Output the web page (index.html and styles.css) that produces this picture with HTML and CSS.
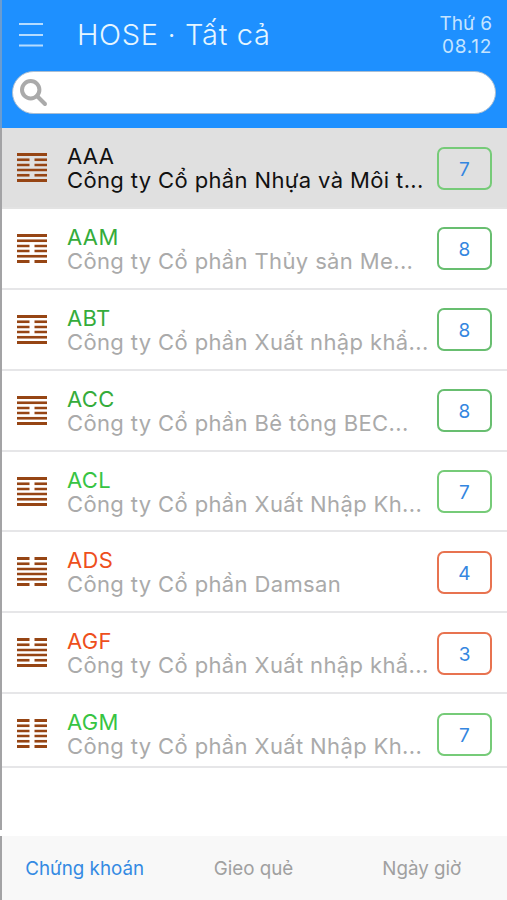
FILE: index.html
```
<!DOCTYPE html>
<html lang="vi">
<head>
<meta charset="utf-8">
<title>HOSE · Tất cả</title>
<link rel="stylesheet" href="styles.css">
</head>
<body>
<svg class="defs" width="0" height="0">
  <symbol id="yang" viewBox="0 0 30 3"><path d="M0 0H30V3H0Z"/></symbol>
  <symbol id="yin" viewBox="0 0 30 3"><path d="M0 0H12.5V3H0ZM17.5 0H30V3H17.5Z"/></symbol>
</svg>
<div class="app">
  <header class="header">
    <div class="bar">
      <svg class="menu" viewBox="0 0 24 26"><path d="M0 2H24M0 13H24M0 23.5H24"/></svg>
      <h1 class="title">HOSE · Tất cả</h1>
      <div class="date"><span>Thứ 6</span><span class="day">08.12</span></div>
    </div>
    <div class="search">
      <svg class="glass" viewBox="0 0 28 28"><circle cx="10.7" cy="10.7" r="8.7"/><path d="M17 17L25 25"/></svg>
    </div>
  </header>
  <main class="list" id="list"></main>
  <nav class="tabs">
    <span class="tab active">Chứng khoán</span>
    <span class="tab">Gieo quẻ</span>
    <span class="tab">Ngày giờ</span>
  </nav>
</div>
<script src="app.js"></script>
</body>
</html>
```
FILE: app.js
```
const stocks = [
  ["AAA", "Công ty Cổ phần Nhựa và Môi t...", 7, "100101", "selected"],
  ["AAM", "Công ty Cổ phần Thủy sản Me...", 8, "110010", "up deep"],
  ["ABT", "Công ty Cổ phần Xuất nhập khẩ...", 8, "100011", "up deep"],
  ["ACC", "Công ty Cổ phần Bê tông BEC...", 8, "110011", "up deep"],
  ["ACL", "Công ty Cổ phần Xuất Nhập Kh...", 7, "100111", "up"],
  ["ADS", "Công ty Cổ phần Damsan", 4, "001110", "down"],
  ["AGF", "Công ty Cổ phần Xuất nhập khẩ...", 3, "001101", "down"],
  ["AGM", "Công ty Cổ phần Xuất Nhập Kh...", 7, "000000", "up"]
];

// Each digit is one line of the hexagram, top to bottom: 1 is whole, 0 is split.
const hexagram = (lines) => `<svg class="hexagram" viewBox="0 0 30 29">${
  [...lines].map((line, i) =>
    `<use href="#${line === "1" ? "yang" : "yin"}" x="0" y="${(i * 5.2).toFixed(1)}" width="30" height="3"/>`
  ).join("")}</svg>`;

document.getElementById("list").innerHTML = stocks.map(([code, name, score, lines, tone]) => `
  <article class="row ${tone}">
    ${hexagram(lines)}
    <div class="text"><div class="code">${code}</div><div class="name">${name}</div></div>
    <div class="score">${score}</div>
  </article>`).join("");
```
FILE: styles.css
```
* {
  box-sizing: border-box;
}

body {
  margin: 0;
  background: #fff;
  font-family: Inter, "Liberation Sans", sans-serif;
}

.defs {
  display: block;
}

.app {
  display: flex;
  flex-direction: column;
  height: 900px;
  overflow: hidden;
}

.header,
.list,
.tabs {
  border-left: 2px solid #a3a3a5;
}

.header {
  flex: none;
  height: 128px;
  background: #1e90ff;
  border-left-color: #6a9cd0;
}

.bar {
  display: flex;
  height: 71px;
  padding: 0 15px 0 17px;
}

.menu {
  width: 24px;
  height: 26px;
  margin-top: 22px;
  fill: none;
  stroke: #b5dcff;
  stroke-width: 2;
}

.title {
  flex: 1;
  margin: 17px 0 0 34px;
  color: #e6f6ff;
  font-size: 29px;
  font-weight: 350;
  line-height: 36px;
  letter-spacing: 0.65px;
  white-space: nowrap;
}

.date {
  display: flex;
  flex-direction: column;
  align-items: flex-end;
  margin-top: 12px;
  color: #c4e4ff;
  font-size: 19px;
  line-height: 23px;
}

.day {
  letter-spacing: 0.7px;
}

.search {
  height: 43px;
  margin: 0 11px 0 10px;
  padding: 7px;
  background: #fff;
  border: 1px solid #a9bdd2;
  border-radius: 22px;
}

.glass {
  display: block;
  width: 28px;
  height: 28px;
  fill: none;
  stroke: #aaa;
  stroke-width: 4;
  stroke-linecap: round;
}

.list {
  flex: 1;
  margin-bottom: 6px;
}

.row {
  display: flex;
  height: 80.9px;
  padding: 0 15px;
  border-bottom: 2px solid #e6e6e8;
}

.row:last-child {
  height: 73.5px;
}

.hexagram {
  flex: none;
  width: 30px;
  height: 29px;
  margin-top: 25px;
  fill: #964514;
}

.text {
  flex: 1;
  min-width: 0;
  margin: 16px 0 0 20px;
  font-size: 22px;
  line-height: 24px;
  letter-spacing: 0.37px;
  white-space: nowrap;
}

.name {
  color: #aaa;
}

.score {
  flex: none;
  width: 55px;
  height: 43px;
  margin-top: 18.5px;
  border: 2px solid #76cb78;
  border-radius: 7px;
  color: #3486e0;
  font-size: 19px;
  line-height: 41px;
  text-align: center;
}

.selected {
  background: #e0e0e0;
  border-color: #e3e3e3;
}

.selected .code,
.selected .name {
  color: #111;
}

.up .code {
  color: #37c443;
}

.deep .code {
  color: #35ac3b;
}

.deep .score {
  border-color: #68be70;
}

.down .code {
  color: #ee4f1c;
}

.down .score {
  border-color: #e87350;
}

.tabs {
  display: grid;
  grid-template-columns: repeat(3, 1fr);
  flex: none;
  height: 64px;
  background: #f8f8f8;
}

.tab {
  color: #a0a0a0;
  font-size: 18.8px;
  line-height: 66px;
  text-align: center;
}

.tab:not(:first-child) {
  padding-right: 2px;
}

.active {
  color: #348ae3;
  padding-right: 3px;
}
```
